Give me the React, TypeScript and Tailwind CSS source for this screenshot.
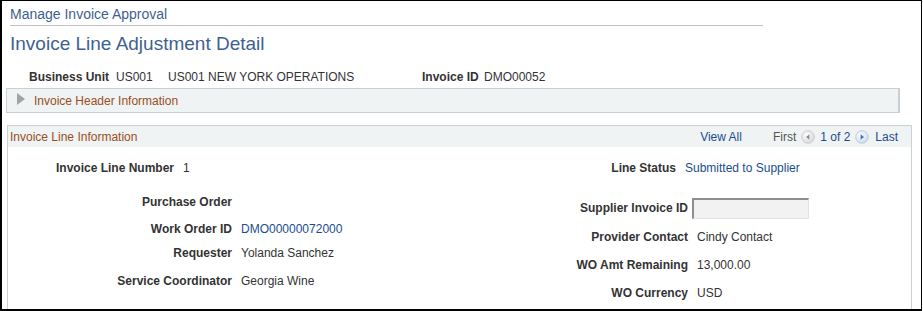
const leftRows = [
  { label: "Purchase Order", value: "", mt: "mt-[14px]" },
  { label: "Work Order ID", value: "DMO00000072000", link: true, mt: "mt-[7px]" },
  { label: "Requester", value: "Yolanda Sanchez", mt: "mt-[4px]" },
  { label: "Service Coordinator", value: "Georgia Wine", mt: "mt-[8px]" },
];

const rightRows = [
  { label: "Provider Contact", value: "Cindy Contact" },
  { label: "WO Amt Remaining", value: "13,000.00" },
  { label: "WO Currency", value: "USD" },
];

function NavCircle({ dir }: { dir: "prev" | "next" }) {
  const active = dir === "next";
  return (
    <svg width="14" height="14" viewBox="0 0 14 14" className="shrink-0">
      <defs>
        <radialGradient id={`g-${dir}`} cx="40%" cy="35%" r="70%">
          <stop offset="0%" stopColor="#ffffff" />
          <stop offset="100%" stopColor={active ? "#c9d8ea" : "#d6d6d6"} />
        </radialGradient>
      </defs>
      <circle cx="7" cy="7" r="6.3" fill={`url(#g-${dir})`} stroke={active ? "#b6c6da" : "#c4c4c4"} strokeWidth="0.8" />
      {active ? (
        <path d="M5.6 4.2 L9 7 L5.6 9.8 Z" fill="#3d73b5" />
      ) : (
        <path d="M8.4 4.2 L5 7 L8.4 9.8 Z" fill="#8c8c8c" />
      )}
    </svg>
  );
}

export default function App() {
  return (
    <div className="w-[923px] h-[311px] bg-white font-['Liberation_Sans',Arial,sans-serif] text-[12px] text-[#333]">
      <div className="w-[922px] h-[311px] border-l-2 border-t border-r border-b-2 border-black overflow-hidden">
        {/* Page header */}
        <div className="ml-[8px] pt-[5px] h-[21px] leading-[16px] text-[14px] text-[#3f5f8c]">
          Manage Invoice Approval
        </div>
        <div className="ml-[8px] mt-[3px] w-[753px] h-px bg-[#c3c3c3]" />
        <h1 className="ml-[8px] mt-[7px] h-[22px] leading-[22px] text-[19px] text-[#3f6190]">
          Invoice Line Adjustment Detail
        </h1>

        {/* Key fields */}
        <div className="mt-[14px] h-[16px] leading-[16px] flex items-center whitespace-nowrap">
          <span className="ml-[27px] w-[87px] shrink-0 font-bold">Business Unit</span>
          <span className="w-[52px] shrink-0">US001</span>
          <span className="w-[254px] shrink-0">US001 NEW YORK OPERATIONS</span>
          <span className="w-[62px] shrink-0 font-bold">Invoice ID</span>
          <span>DMO00052</span>
        </div>

        {/* Collapsed group box */}
        <div className="ml-[4px] mt-[3px] w-[894px] h-[25px] bg-[#f0f3f4] border border-[#c9cfd3] border-r-2 flex items-center">
          <svg width="8" height="12" viewBox="0 0 8 12" className="ml-[10px] mt-[-4px]">
            <path d="M0 0 L8 6 L0 12 Z" fill="#a3a3a3" />
          </svg>
          <span className="ml-[9px] mt-[1px] text-[#9a4e1c]">Invoice Header Information</span>
        </div>

        {/* Invoice line section */}
        <div className="ml-[5px] mt-[12px] w-[905px] h-[200px] border-l border-r border-t border-[#cbd0d4]">
          <div className="h-[21px] bg-[#f0f3f4] flex items-center">
            <span className="ml-[2px] text-[#9a4e1c]">Invoice Line Information</span>
            <div className="ml-auto mr-[13px] flex items-center leading-[14px]">
              <span className="text-[#1a4d8c]">View All</span>
              <span className="ml-[31px] text-[#555]">First</span>
              <span className="ml-[5px]"><NavCircle dir="prev" /></span>
              <span className="ml-[5px] text-[#1a4d8c]">1 of 2</span>
              <span className="ml-[5px]"><NavCircle dir="next" /></span>
              <span className="ml-[6px] text-[#1a4d8c]">Last</span>
            </div>
          </div>

          <div className="mt-[11px] h-[20px] flex items-center">
            <span className="w-[166px] text-right font-bold">Invoice Line Number</span>
            <span className="ml-[9px] w-[285px]">1</span>
            <span className="w-[208px] text-right font-bold">Line Status</span>
            <span className="ml-[9px] text-[#1a4d8c]">Submitted to Supplier</span>
          </div>

          <div className="flex">
            <div className="w-[460px]">
              {leftRows.map((row) => (
                <div key={row.label} className={`${row.mt} h-[20px] flex items-center`}>
                  <span className="w-[224px] text-right font-bold">{row.label}</span>
                  <span className={`ml-[9px] ${row.link ? "text-[#1a4d8c]" : ""}`}>{row.value}</span>
                </div>
              ))}
            </div>
            <div>
              <div className="mt-[19px] h-[22px] flex items-center">
                <span className="w-[220px] text-right font-bold">Supplier Invoice ID</span>
                <span className="ml-[4px] w-[117px] h-[21px] bg-[#f2f2f2] border-t-2 border-l-2 border-[#8e8e8e] border-r border-b border-r-[#e2e2e2] border-b-[#e2e2e2]" />
              </div>
              {rightRows.map((row) => (
                <div key={row.label} className="mt-[8px] h-[20px] flex items-center">
                  <span className="w-[220px] text-right font-bold">{row.label}</span>
                  <span className="ml-[9px]">{row.value}</span>
                </div>
              ))}
            </div>
          </div>
        </div>
      </div>
    </div>
  );
}
